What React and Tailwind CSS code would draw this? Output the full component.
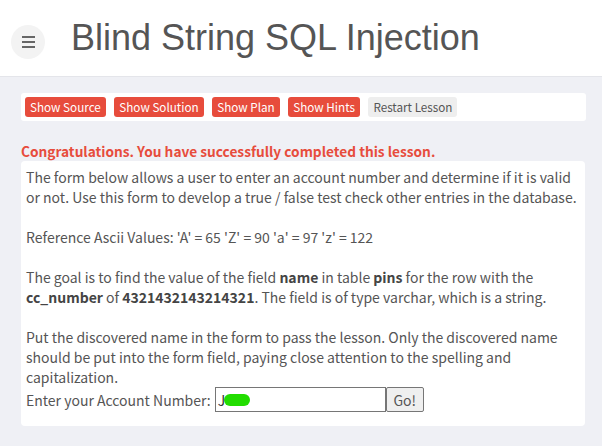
import React from 'react';

const bodyFont = { fontFamily: '"Noto Sans CJK KR", "Noto Sans", sans-serif' };

const LessonButton = ({ label, muted }) => (
  <button
    className={`h-5 px-[5px] rounded-[3px] text-[11.7px] leading-5 ${muted ? 'bg-[#eeeeee] text-[#555]' : 'bg-[#e74c3c] text-white'}`}
    style={bodyFont}
  >
    {label}
  </button>
);

export default function App() {
  return (
    <div className="min-h-[446px] bg-[#eff0f5]">
      {/* header */}
      <div className="h-[77px] bg-white border-b border-[#e4e5ea] flex items-center">
        <div className="ml-[11px] mt-[8px] w-[34px] h-[34px] rounded-full bg-[#f3f3f3] flex flex-col items-center justify-center gap-[3px]">
          <span className="block w-[13px] h-[2px] bg-[#666]" />
          <span className="block w-[13px] h-[2px] bg-[#666]" />
          <span className="block w-[13px] h-[2px] bg-[#666]" />
        </div>
        <h1 className="ml-[26px] mb-[1px] text-[36px] text-[#555] font-['Liberation_Sans',Arial,sans-serif]">
          Blind String SQL Injection
        </h1>
      </div>

      <div className="px-[21px]">
        {/* lesson buttons */}
        <div className="mt-[16px] w-[565px] bg-white rounded-[3px] px-[4px] py-[4px] flex gap-[8.5px]">
          <LessonButton label="Show Source" />
          <LessonButton label="Show Solution" />
          <LessonButton label="Show Plan" />
          <LessonButton label="Show Hints" />
          <LessonButton label="Restart Lesson" muted />
        </div>

        <p className="mt-[20px] text-[13.7px] leading-5 font-bold text-[#e74c3c]" style={bodyFont}>
          Congratulations. You have successfully completed this lesson.
        </p>

        {/* lesson content */}
        <div
          className="w-[564px] bg-white rounded-[4px] pl-[5px] pr-[4px] pt-[6px] pb-[14px] text-[14px] leading-5 text-[#555]"
          style={bodyFont}
        >
          <p>
            The form below allows a user to enter an account number and determine if it is valid or not. Use this form to develop a true / false test check other entries in the database.
          </p>
          <br />
          <p>Reference Ascii Values: 'A' = 65 'Z' = 90 'a' = 97 'z' = 122</p>
          <br />
          <p>
            The goal is to find the value of the field <b className="text-[#444]">name</b> in table{' '}
            <b className="text-[#444]">pins</b> for the row with the <b className="text-[#444]">cc_number</b> of{' '}
            <b className="text-[#444]">4321432143214321</b>. The field is of type varchar, which is a string.
          </p>
          <br />
          <p>
            Put the discovered name in the form to pass the lesson. Only the discovered name should be put into the form field, paying close attention to the spelling and capitalization.
          </p>
          <form className="flex items-center" onSubmit={(e) => e.preventDefault()}>
            <span>Enter your Account Number:</span>
            <div className="ml-[4px] relative w-[171px] h-[25px] border border-[#767676] bg-white flex items-center px-[2px] text-[#333]">
              J
              <span className="absolute left-[8px] top-[6px] w-[26px] h-[12px] rounded-full bg-[#22dd00]" />
            </div>
            <button className="w-[38px] h-[25px] border border-[#767676] rounded-[2px] bg-[#efefef] text-[#555]">
              Go!
            </button>
          </form>
        </div>
      </div>
    </div>
  );
}
